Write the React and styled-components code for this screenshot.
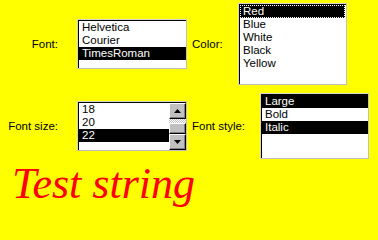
import React from 'react'
import styled, { createGlobalStyle } from 'styled-components'

const GlobalStyle = createGlobalStyle`
    html, body {
        margin: 0;
        padding: 0;
        background: #ffff00;
    }
    body {
        width: 378px;
        height: 223px;
        overflow: hidden;
        font-family: "Liberation Sans", Arial, sans-serif;
        font-size: 11.5px;
        color: #000;
    }
`

const Page = styled.div`
    display: flex;
    flex-direction: column;
    gap: 8px;
    padding-top: 3px;
`

const Row = styled.div`
    display: flex;
    align-items: center;
    height: ${props => props.$height}px;
`

const Label = styled.div`
    width: ${props => props.$width}px;
    margin-left: ${props => props.$gap || 0}px;
    text-align: ${props => props.$align || 'left'};
    white-space: nowrap;
    flex-shrink: 0;
`

const ListBox = styled.div`
    display: flex;
    box-sizing: border-box;
    width: ${props => props.$width}px;
    height: ${props => props.$height}px;
    margin-left: ${props => props.$gap || 0}px;
    flex-shrink: 0;
    background: #fff;
    border: 1px solid #c0c0c0;
    border-top-color: #d4d4d4;
    border-left-color: #d4d4d4;
    box-shadow: inset 1px 1px 0 #000;
    padding: 1px 0 0 1px;
    overflow: hidden;
`

const Options = styled.ul`
    flex: 1;
    list-style: none;
    margin: 0;
    padding: 0;
`

const Option = styled.li`
    height: 13px;
    line-height: 13px;
    padding-left: 3px;
    margin-right: ${props => props.$inset ? 1 : 0}px;
    background: ${props => props.$selected ? '#000' : 'transparent'};
    color: ${props => props.$selected ? '#fff' : '#000'};
    outline: ${props => props.$focused ? '1px dotted #fff' : 'none'};
    outline-offset: -1px;
    white-space: nowrap;
`

const ScrollBar = styled.div`
    display: flex;
    flex-direction: column;
    width: 17px;
    flex-shrink: 0;
`

const ScrollButton = styled.div`
    display: flex;
    align-items: center;
    justify-content: center;
    box-sizing: border-box;
    height: ${props => props.$height}px;
    background: #c0c0c0;
    border-top: 1px solid #fff;
    border-left: 1px solid #fff;
    border-right: 1px solid #000;
    border-bottom: 1px solid #000;
    box-shadow: inset -1px -1px 0 #808080;
`

const Track = styled.div`
    height: ${props => props.$height}px;
    background: repeating-conic-gradient(#c0c0c0 0 25%, #fff 0 50%) 0 0 / 2px 2px;
`

const Sample = styled.div`
    font-family: "Liberation Serif", "Times New Roman", serif;
    font-style: italic;
    font-size: 44px;
    line-height: 44px;
    color: #ff0000;
    padding-left: 12px;
    margin-top: -5px;
    white-space: nowrap;
`

function Arrow({ up }) {
    return (
        <svg width="7" height="4" viewBox="0 0 7 4">
            <polygon points={up ? '3.5,0 7,4 0,4' : '0,0 7,0 3.5,4'} fill="#000" />
        </svg>
    )
}

function ListField({ items, selected, focused, width, height, gap, scroll }) {
    return (
        <ListBox $width={width} $height={height} $gap={gap}>
            <Options>
                {items.map(item =>
                    <Option
                        key={item}
                        $selected={selected.includes(item)}
                        $focused={focused === item}
                        $inset={focused === item}
                    >
                        {item}
                    </Option>
                )}
            </Options>
            {scroll &&
                <ScrollBar>
                    <ScrollButton $height={16}><Arrow up /></ScrollButton>
                    <Track $height={4} />
                    <ScrollButton $height={11} />
                    <ScrollButton $height={16}><Arrow /></ScrollButton>
                </ScrollBar>
            }
        </ListBox>
    )
}

export default function App() {
    return (
        <>
            <GlobalStyle />
            <Page>
                <Row $height={82}>
                    <Label $width={58} $align="right">Font:</Label>
                    <ListField
                        items={['Helvetica', 'Courier', 'TimesRoman']}
                        selected={['TimesRoman']}
                        width={110}
                        height={50}
                        gap={19}
                    />
                    <Label $width={46} $gap={5}>Color:</Label>
                    <ListField
                        items={['Red', 'Blue', 'White', 'Black', 'Yellow']}
                        selected={['Red']}
                        focused="Red"
                        width={109}
                        height={82}
                    />
                </Row>
                <Row $height={66}>
                    <Label $width={58} $align="right">Font size:</Label>
                    <ListField
                        items={['18', '20', '22']}
                        selected={['22']}
                        width={110}
                        height={50}
                        gap={19}
                        scroll
                    />
                    <Label $width={68} $gap={5}>Font style:</Label>
                    <ListField
                        items={['Large', 'Bold', 'Italic']}
                        selected={['Large', 'Italic']}
                        width={109}
                        height={66}
                    />
                </Row>
                <Sample>Test string</Sample>
            </Page>
        </>
    )
}
